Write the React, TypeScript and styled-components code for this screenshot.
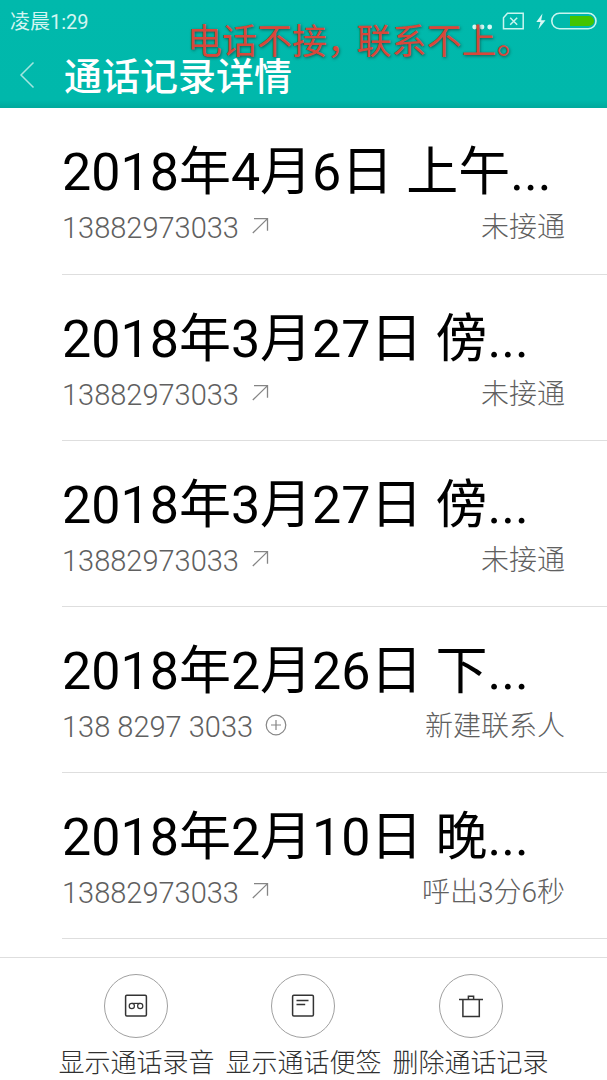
import React from "react";
import styled, { createGlobalStyle } from "styled-components";

const GlobalStyle = createGlobalStyle`
  *, *::before, *::after { box-sizing: border-box; }
  body {
    margin: 0;
    background: #fff;
    font-family: Roboto, "Noto Sans CJK SC", sans-serif;
  }
  h1, h2, p, ul { margin: 0; padding: 0; font-weight: inherit; }
  button { font-family: inherit; padding: 0; border: 0; background: none; cursor: pointer; }
`;

const Page = styled.div`
  display: flex;
  flex-direction: column;
  min-height: 100vh;
`;

const Header = styled.header`
  position: relative;
  height: 108px;
  color: #fff;
  background: linear-gradient(to top, #00a99c 0, #00b8ab 8px, #00b9ac 100%);
`;

const StatusBar = styled.div`
  display: flex;
  align-items: center;
  justify-content: space-between;
  height: 41px;
  padding: 0 10px;
`;

const Clock = styled.time`
  padding-top: 2px;
  font-size: 20px;
  line-height: 24px;
  color: #d3f5f1;
`;

const StatusIcons = styled.div`
  display: flex;
  align-items: center;
`;

const TitleBar = styled.div`
  display: flex;
  align-items: center;
  height: 68px;
`;

const BackButton = styled.button`
  display: flex;
  align-items: center;
  width: 64px;
  height: 48px;
  padding-left: 19px;
`;

const Title = styled.h1`
  padding-top: 4px;
  font-size: 38px;
  line-height: 48px;
  font-weight: 500;
`;

const Caption = styled.p`
  position: absolute;
  top: 20px;
  left: 187px;
  display: flex;
  gap: 12px;
  font-family: "Noto Sans CJK SC", sans-serif;
  font-size: 35px;
  line-height: 38px;
  color: #d8473a;
  font-feature-settings: "halt";
  white-space: nowrap;
  text-shadow: 1px 1px 3px rgba(20, 70, 60, 0.8);
  pointer-events: none;
`;

const CallList = styled.ul`
  flex: 1;
  padding: 0 0 0 62px;
  list-style: none;
`;

const CallRow = styled.li`
  height: 166px;
  padding: 30px 42px 0 0;
  border-bottom: 1px solid #dedede;

  &:first-child {
    height: 167px;
  }
`;

const CallDate = styled.h2`
  font-size: 52px;
  line-height: 70px;
  font-weight: 400;
  color: #000;
  white-space: nowrap;
`;

const CallInfo = styled.div`
  display: flex;
  align-items: center;
  justify-content: space-between;
  height: 40px;
  line-height: 40px;
  font-weight: 300;
  color: #606060;

  svg {
    margin-bottom: 4px;
  }
`;

const Phone = styled.span`
  display: flex;
  align-items: center;
  gap: 12px;
  font-size: 29px;
`;

const Status = styled.span`
  font-size: 28px;
`;

const Footer = styled.footer`
  display: flex;
  justify-content: center;
  align-items: flex-start;
  gap: 11px;
  height: 123px;
  padding-top: 16px;
  border-top: 1px solid #dedede;
`;

const Action = styled.button`
  display: flex;
  flex-direction: column;
  align-items: center;
  gap: 8px;
  font-size: 26px;
  line-height: 34px;
  font-weight: 300;
  color: #303030;
  white-space: nowrap;
`;

const ActionCircle = styled.span`
  flex: none;
  display: grid;
  place-items: center;
  width: 64px;
  height: 64px;
  border: 1px solid #a0a0a0;
  border-radius: 50%;
`;

const OutgoingIcon = () => (
  <svg width="18" height="18" viewBox="0 0 18 18" fill="none" stroke="#858585" strokeWidth="1.3" aria-hidden="true">
    <path d="M3 1.7h13.5v12M16.3 1.9L1.8 16" />
  </svg>
);

const AddIcon = () => (
  <svg width="22" height="22" viewBox="0 0 22 22" fill="none" stroke="#858585" strokeWidth="1.2" aria-hidden="true">
    <circle cx="11" cy="11" r="9.8" />
    <path d="M11 6v10M6 11h10" />
  </svg>
);

const RecordingIcon = () => (
  <svg width="24" height="24" viewBox="0 0 24 24" fill="none" stroke="#333" aria-hidden="true">
    <rect x="1.6" y="1.2" width="20.8" height="20.8" rx="1.2" strokeWidth="1.5" />
    <circle cx="7.8" cy="12" r="2.6" strokeWidth="1.2" />
    <circle cx="16.2" cy="12" r="2.6" strokeWidth="1.2" />
    <path d="M7.8 9.4h8.4" strokeWidth="1.2" />
  </svg>
);

const NoteIcon = () => (
  <svg width="24" height="24" viewBox="0 0 24 24" fill="none" stroke="#333" strokeWidth="1.5" aria-hidden="true">
    <rect x="1.6" y="1.2" width="20.8" height="20.8" rx="1.2" />
    <path d="M5.5 6.5h12M5.5 10.5h8.7" />
  </svg>
);

const TrashIcon = () => (
  <svg width="24" height="24" viewBox="0 0 24 24" fill="none" stroke="#333" strokeWidth="1.5" aria-hidden="true">
    <path d="M0 5.5h24M3.9 5.5v17h16.4v-17M9.4 5.5V2.2h5.2v3.3" />
  </svg>
);

const BackIcon = () => (
  <svg width="16" height="28" viewBox="0 0 16 28" fill="none" stroke="#a4e6e0" strokeWidth="1.5" aria-hidden="true">
    <path d="M14.5 1.5L2 14l12.5 12.5" />
  </svg>
);

const StatusGlyphs = () => (
  <svg width="125" height="20" viewBox="0 0 125 20" fill="none" stroke="#c9f5f0" aria-hidden="true">
    <g fill="#d8f8f5" stroke="none">
      <circle cx="2.7" cy="16" r="2.4" />
      <circle cx="10" cy="16" r="2.4" />
      <circle cx="17.7" cy="16" r="2.4" />
      <path d="M70.5 2.5L64.3 11h4.2l-2.2 7.2 7.2-9h-4.3z" />
    </g>
    <path d="M35.5 2.3h15.7v15.4H31.5V6.8z" strokeWidth="1.5" />
    <path d="M38.2 6.7l7 7M45.2 6.7l-7 7" strokeWidth="1.5" />
    <rect x="79.8" y="2.3" width="44.2" height="15.4" rx="7.7" strokeWidth="1.6" />
    <path d="M98 4.9h19a5.1 5.1 0 0 1 0 10.2H98z" fill="#43c400" stroke="none" />
  </svg>
);

type Call = { date: string; phone: string; status: string; isNew?: boolean };

const calls: Call[] = [
  { date: "2018年4月6日 上午...", phone: "13882973033", status: "未接通" },
  { date: "2018年3月27日 傍...", phone: "13882973033", status: "未接通" },
  { date: "2018年3月27日 傍...", phone: "13882973033", status: "未接通" },
  { date: "2018年2月26日 下...", phone: "138 8297 3033", status: "新建联系人", isNew: true },
  { date: "2018年2月10日 晚...", phone: "13882973033", status: "呼出3分6秒" },
];

const actions = [
  { label: "显示通话录音", Icon: RecordingIcon },
  { label: "显示通话便签", Icon: NoteIcon },
  { label: "删除通话记录", Icon: TrashIcon },
];

export default function App() {
  return (
    <Page>
      <GlobalStyle />
      <Header>
        <StatusBar>
          <Clock>凌晨1:29</Clock>
          <StatusIcons>
            <StatusGlyphs />
          </StatusIcons>
        </StatusBar>
        <TitleBar>
          <BackButton aria-label="返回">
            <BackIcon />
          </BackButton>
          <Title>通话记录详情</Title>
        </TitleBar>
        <Caption>
          <span>电话不接，</span>
          <span>联系不上。</span>
        </Caption>
      </Header>
      <CallList>
        {calls.map((call, i) => (
          <CallRow key={i}>
            <CallDate>{call.date}</CallDate>
            <CallInfo>
              <Phone>
                {call.phone}
                {call.isNew ? <AddIcon /> : <OutgoingIcon />}
              </Phone>
              <Status>{call.status}</Status>
            </CallInfo>
          </CallRow>
        ))}
      </CallList>
      <Footer>
        {actions.map(({ label, Icon }) => (
          <Action key={label}>
            <ActionCircle>
              <Icon />
            </ActionCircle>
            {label}
          </Action>
        ))}
      </Footer>
    </Page>
  );
}
